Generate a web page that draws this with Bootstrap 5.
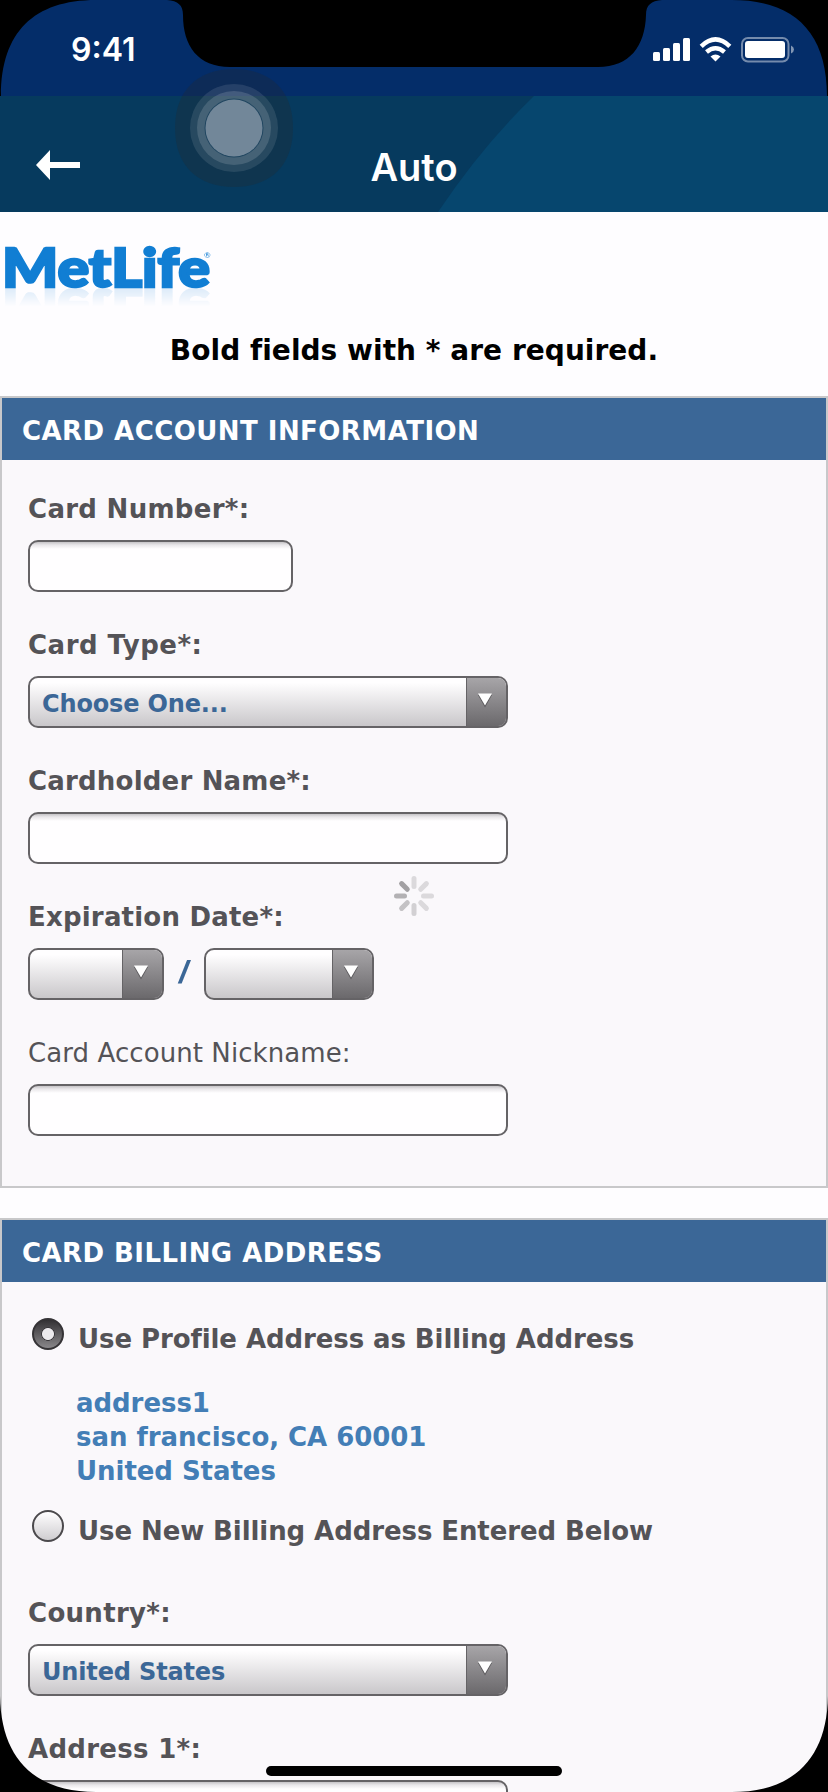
<!DOCTYPE html>
<html lang="en">
<head>
<meta charset="utf-8">
<meta name="viewport" content="width=device-width, initial-scale=1">
<title>Auto</title>
<link href="https://cdn.jsdelivr.net/npm/bootstrap@5.3.0/dist/css/bootstrap.min.css" rel="stylesheet">
<style>
  html, body { height: 1792px; overflow: hidden; }
  body { background: #fefdff; font-family: "DejaVu Sans", sans-serif; font-size: 26px; line-height: 40px; color: #545357; }
  .phone { height: 1792px; }
  .status { height: 96px; background: #042d69; padding: 0 33px 0 71px; font-family: Inter, sans-serif; }
  .clock { font-size: 32px; font-weight: 600; line-height: 40px; color: #fff; padding-top: 3px; }
  .signals { margin-top: 4px; }
  .titlebar { height: 116px; background: #063a5e; }
  .titlebar h1 { font: 600 38px/48px Inter, sans-serif; color: #fff; padding-top: 47px; }
  .swoosh { inset: 0; }
  .back { left: 36px; top: 54px; }
  .brand { height: 100px; padding: 18px 0 0 4px; }
  .brand svg { overflow: visible; -webkit-box-reflect: below -20px linear-gradient(transparent 58%, rgba(0,0,0,.22)); }
  .note { height: 84px; font-size: 28px; line-height: 40px; padding-top: 19px; color: #000; font-weight: 700; }
  .note span { letter-spacing: .04px; }
  .panel { border: 2px solid #c8c8ca; background: #faf8fb; }
  .panel h2 { height: 62px; margin: 0; padding: 13px 0 0 20px; background: #3b6797; color: #fff; font-size: 26px; line-height: 40px; font-weight: 700; letter-spacing: .45px; }
  .panel-one { height: 792px; margin-bottom: 30px; }
  .panel-two { height: 720px; }
  .fields { padding: 29px 26px 0; }
  .field { height: 136px; }
  .form-label { display: block; margin: 0 0 11px; font-weight: 700; letter-spacing: .3px; white-space: nowrap; }
  .form-label.plain { font-weight: 400; letter-spacing: .08px; }
  .form-label.loose { letter-spacing: .5px; }
  .form-label.tight { letter-spacing: .2px; }
  .form-control, .drop { height: 52px; border: 2px solid #656366; border-radius: 10px; }
  .form-control { background: linear-gradient(#c6c4c7, #e9e7ea 3px, #fffeff 7px); padding: 0 12px; }
  .drop { overflow: hidden; background: linear-gradient(#fffeff 10%, #c9c7ca); }
  .drop select { appearance: none; border: 0; background: none; padding: 4px 0 0 12px; min-width: 0; font-weight: 700; font-size: 24px; line-height: 44px; letter-spacing: -.15px; color: #3b6797; }
  .knob { width: 40px; flex: none; border-left: 1px solid #656366; background: linear-gradient(#a7a5a8, #6b696c); padding: 15px 0 0 10px; }
  .knob svg { display: block; }
  .w-long { width: 480px; }
  .w-num { width: 265px; }
  .slash { width: 40px; font-weight: 700; font-size: 29px; color: #3b6797; padding-top: 3px; }
  .slash span { display: inline-block; transform: scaleX(1.25); }
  .choice { height: 40px; gap: 14px; }
  .choice.first { margin-top: 7px; }
  .choice.second { margin-top: 22px; }
  .choice input { appearance: none; width: 32px; height: 32px; margin: 0; border: 2px solid #4b494c; border-radius: 50%; background: linear-gradient(#fffeff, #cfcdd0); }
  .choice input:checked { border-color: #353336; background: radial-gradient(circle at 50% 50%, #eceaed 5.5px, #38363a 6.5px, transparent 7px), linear-gradient(#333134, #89878a); }
  .choice label { font-weight: 700; letter-spacing: -.08px; padding-top: 1px; }
  address { margin: 28px 0 0; color: #437eb6; font-weight: 700; line-height: 34px; padding-left: 48px; letter-spacing: -.05px; }
  .country { margin-top: 43px; }
  .assist { left: 174px; top: 68px; z-index: 5; }
  .loader { left: 394px; top: 876px; z-index: 5; }
  .bezel { inset: 0; z-index: 6; pointer-events: none; }
</style>
</head>
<body>
<div class="phone position-relative overflow-hidden">
  <header>
    <div class="status d-flex justify-content-between align-items-center">
      <div class="clock">9:41</div>
      <svg class="signals" width="143" height="26" viewBox="652 37 143 26" fill="#fff">
        <rect x="653" y="52" width="7" height="9" rx="1.5"/><rect x="663" y="48" width="7" height="13" rx="1.5"/><rect x="673" y="43" width="7" height="18" rx="1.5"/><rect x="683" y="38" width="7" height="23" rx="1.5"/>
        <path d="M710.500 56.500Q715.500 52.500 720.500 56.500L715.500 61.500Z"/>
        <path d="M706.500 52Q715.500 44.500 724.500 52M701.200 46.300Q715.500 32.500 729.800 46.300" fill="none" stroke="#fff" stroke-width="4.500"/>
        <rect x="742" y="38" width="46.500" height="23.500" rx="6" fill="none" stroke="#fff" stroke-opacity=".45" stroke-width="2"/>
        <rect x="745" y="41" width="40" height="17" rx="3"/>
        <path d="M791 45.500Q794 47 794 49.500T791 53.500Z" fill-opacity=".5"/>
      </svg>
    </div>
    <div class="titlebar position-relative text-center">
      <svg class="swoosh position-absolute" width="828" height="116" viewBox="0 0 828 116"><path d="M534 0Q482 50 438 116H828V0Z" fill="#06466e"/></svg>
      <a class="back position-absolute d-flex" href="#" aria-label="Back"><svg width="44" height="30" viewBox="0 0 44 30" fill="#fff"><path d="M0 15L14 0V12H44V18H14V30Z"/></svg></a>
      <h1 class="position-relative m-0">Auto</h1>
    </div>
  </header>
  <main>
    <div class="brand">
      <svg class="d-block" width="210" height="68" viewBox="0 0 210 68" role="img" aria-label="MetLife">
        <text x="-2" y="56.500" textLength="208" lengthAdjust="spacingAndGlyphs" font-family="Lato" font-weight="900" font-size="54" fill="#117ed3" stroke="#117ed3" stroke-width="2.500">MetLife</text>
        <text x="200" y="28" font-family="Lato" font-size="8" fill="#117ed3">®</text>
      </svg>
    </div>
    <div class="note text-center"><span>Bold fields with * are required.</span></div>

    <section class="panel panel-one">
      <h2>CARD ACCOUNT INFORMATION</h2>
      <div class="fields">
        <div class="field"><label class="form-label" for="num">Card Number*:</label><input class="form-control w-num" id="num"></div>
        <div class="field"><label class="form-label loose" for="type">Card Type*:</label>
          <div class="drop w-long d-flex"><select class="flex-grow-1" id="type"><option>Choose One...</option></select><span class="knob"><svg width="16" height="15" viewBox="0 0 16 15"><path d="M1 2H15L8 14.500Z" fill="#5b595c"/><path d="M1 0.500H15L8 12.500Z" fill="#fff"/></svg></span></div></div>
        <div class="field"><label class="form-label tight" for="holder">Cardholder Name*:</label><input class="form-control w-long" id="holder"></div>
        <div class="field"><label class="form-label tight">Expiration Date*:</label>
          <div class="d-flex">
            <div class="drop d-flex" style="width:136px"><select class="flex-grow-1" aria-label="Month"></select><span class="knob"><svg width="16" height="15" viewBox="0 0 16 15"><path d="M1 2H15L8 14.500Z" fill="#5b595c"/><path d="M1 0.500H15L8 12.500Z" fill="#fff"/></svg></span></div>
            <span class="slash text-center"><span>/</span></span>
            <div class="drop d-flex" style="width:170px"><select class="flex-grow-1" aria-label="Year"></select><span class="knob"><svg width="16" height="15" viewBox="0 0 16 15"><path d="M1 2H15L8 14.500Z" fill="#5b595c"/><path d="M1 0.500H15L8 12.500Z" fill="#fff"/></svg></span></div>
          </div></div>
        <div class="field"><label class="form-label plain" for="nick">Card Account Nickname:</label><input class="form-control w-long" id="nick"></div>
      </div>
    </section>

    <section class="panel panel-two">
      <h2>CARD BILLING ADDRESS</h2>
      <div class="fields">
        <div class="choice first d-flex ps-1"><input type="radio" name="addr" id="a1" checked><label for="a1">Use Profile Address as Billing Address</label></div>
        <address>address1<br>san francisco, CA 60001<br>United States</address>
        <div class="choice second d-flex ps-1"><input type="radio" name="addr" id="a2"><label for="a2">Use New Billing Address Entered Below</label></div>
        <div class="field country"><label class="form-label" for="ctry">Country*:</label>
          <div class="drop w-long d-flex"><select class="flex-grow-1" id="ctry"><option>United States</option></select><span class="knob"><svg width="16" height="15" viewBox="0 0 16 15"><path d="M1 2H15L8 14.500Z" fill="#5b595c"/><path d="M1 0.500H15L8 12.500Z" fill="#fff"/></svg></span></div></div>
        <div class="field"><label class="form-label" for="ad1">Address 1*:</label><input class="form-control w-long" id="ad1"></div>
      </div>
    </section>
  </main>

  <svg class="assist position-absolute" width="120" height="120" viewBox="-60 -60 120 120">
    <path d="M0-59C37-59 59-37 59 0S37 59 0 59-59 37-59 0-37-59 0-59Z" fill="#2a2a2a" fill-opacity=".27"/>
    <circle r="44" fill="#fff" fill-opacity=".1"/><circle r="37" fill="#fff" fill-opacity=".14"/>
    <circle r="29.500" fill="#204660"/><circle r="28.500" fill="#728799"/>
  </svg>

  <svg class="loader position-absolute" width="40" height="40" viewBox="-20 -20 40 40" stroke-width="5" stroke-linecap="round">
    <g stroke="#dbd9dc"><path d="M0-9.500V-17.500"/><path d="M0-9.500V-17.500" transform="rotate(45)"/><path d="M0-9.500V-17.500" transform="rotate(90)"/><path d="M0-9.500V-17.500" transform="rotate(135)"/></g>
    <path d="M0-9.500V-17.500" transform="rotate(180)" stroke="#d2d0d3"/><path d="M0-9.500V-17.500" transform="rotate(225)" stroke="#c4c2c5"/><path d="M0-9.500V-17.500" transform="rotate(270)" stroke="#b3b1b4"/><path d="M0-9.500V-17.500" transform="rotate(315)" stroke="#a2a0a3"/>
  </svg>

  <svg class="bezel position-absolute" width="828" height="1792" viewBox="0 0 828 1792">
    <path d="M0 0H96C34 0 1 32 1 96H0ZM828 0H732C794 0 827 32 827 96H828Z"/>
    <path d="M167 0C178 1 183 5 183 15C183 46 198 67 230 67H598C630 67 645 46 646 15C646 5 651 1 662 0Z"/>
    <path d="M0 1696C1 1758 34 1792 96 1792H0ZM828 1696C827 1758 794 1792 732 1792H828Z"/>
    <rect x="266" y="1766" width="296" height="10" rx="5"/>
  </svg>
</div>
<script src="https://cdn.jsdelivr.net/npm/bootstrap@5.3.0/dist/js/bootstrap.bundle.min.js"></script>
</body>
</html>
